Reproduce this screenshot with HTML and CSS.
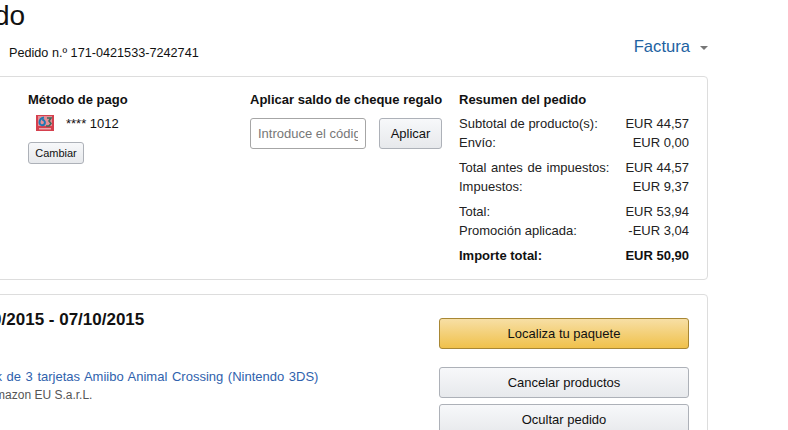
FILE: index.html
```html
<!DOCTYPE html>
<html lang="es">
<head>
<meta charset="utf-8">
<title>Detalles del pedido</title>
<link rel="stylesheet" href="styles.css">
</head>
<body>
<main class="page">
  <h1 class="title">Detalles del pedido</h1>
  <div class="order-row">
    <span class="order-no">Pedido n.º 171-0421533-7242741</span>
    <a class="invoice">Factura <span class="caret"></span></a>
  </div>
  <section class="card summary-card">
    <div class="pay">
      <h2 class="head">Método de pago</h2>
      <div class="pay-line">
        <svg class="pay-icon" width="18" height="18" viewBox="0 0 18 18">
          <rect x="0" y="1" width="18" height="16" fill="#d5404e"/>
          <rect x="2" y="2" width="14" height="10" fill="#e58f97"/>
          <path d="M8 3.5C5 4 3.5 6 3.5 8.5a2.7 2.7 0 1 0 2.7-2.7" fill="none" stroke="#1f78b4" stroke-width="2"/>
          <path d="M11 4h4l-2 3 2 2.5-2 2.5h-3" fill="none" stroke="#3f6a5e" stroke-width="1.6"/>
          <rect x="3" y="14" width="12" height="1.5" fill="#eba9ad"/>
        </svg>
        <span>**** 1012</span>
      </div>
      <button class="btn btn-small">Cambiar</button>
    </div>
    <div class="gift">
      <h2 class="head">Aplicar saldo de cheque regalo</h2>
      <div class="gift-row">
        <input class="code" placeholder="Introduce el código">
        <button class="btn btn-apply">Aplicar</button>
      </div>
    </div>
    <div class="totals">
      <h2 class="head">Resumen del pedido</h2>
      <div class="group">
        <div class="line"><span>Subtotal de producto(s):</span><span>EUR 44,57</span></div>
        <div class="line"><span>Envío:</span><span>EUR 0,00</span></div>
      </div>
      <div class="group">
        <div class="line"><span class="spaced">Total antes de impuestos:</span><span>EUR 44,57</span></div>
        <div class="line"><span>Impuestos:</span><span>EUR 9,37</span></div>
      </div>
      <div class="group">
        <div class="line"><span>Total:</span><span>EUR 53,94</span></div>
        <div class="line"><span>Promoción aplicada:</span><span>-EUR 3,04</span></div>
      </div>
      <div class="group">
        <div class="line line-bold"><span>Importe total:</span><span>EUR 50,90</span></div>
      </div>
    </div>
  </section>
  <section class="card ship-card">
    <div class="ship-info">
      <h3 class="dates">06/10/2015 - 07/10/2015</h3>
      <a class="product">Pack de 3 tarjetas Amiibo Animal Crossing (Nintendo 3DS)</a>
      <p class="seller">Vendido por: Amazon EU S.a.r.L.</p>
    </div>
    <div class="actions">
      <button class="btn btn-wide btn-primary">Localiza tu paquete</button>
      <button class="btn btn-wide btn-cancel">Cancelar productos</button>
      <button class="btn btn-wide">Ocultar pedido</button>
    </div>
  </section>
</main>
</body>
</html>
```

FILE: styles.css
```css
html, body {
  margin: 0;
  height: 430px;
  overflow: hidden;
  background: #fff;
}
body {
  font-family: "Liberation Sans", Arial, sans-serif;
  font-size: 13px;
  color: #111;
}
.page {
  width: 748px;
  margin-left: -40px;
}
.title {
  margin: 0 0 0 -173px;
  font-size: 28px;
  font-weight: 400;
  line-height: 32px;
  white-space: nowrap;
}
.order-row {
  display: flex;
  justify-content: space-between;
  align-items: center;
  height: 28px;
  margin-top: 6px;
  padding: 0 0 0 49px;
}
.order-no {
  padding-top: 2px;
  font-size: 12.67px;
}
.invoice {
  display: flex;
  align-items: center;
  margin-top: -11px;
  font-size: 16.6px;
  color: #2162a1;
}
.caret {
  width: 0;
  height: 0;
  margin-left: 10px;
  margin-top: 2px;
  border: 4px solid transparent;
  border-top-color: #777;
  border-bottom: 0;
}
.card {
  box-sizing: border-box;
  border: 1px solid #ddd;
  border-radius: 4px;
}
.summary-card {
  display: grid;
  grid-template-columns: 222px 209px 230px;
  height: 204px;
  margin-top: 10px;
  padding: 14px 18px 0 67px;
}
.head {
  margin: 0;
  font-size: 13px;
  font-weight: 700;
  line-height: 18px;
  color: #111;
  white-space: nowrap;
}
.pay-line {
  display: flex;
  align-items: center;
  gap: 12px;
  height: 18px;
  margin: 5px 0 0 8px;
}
.pay-icon { display: block; }
.btn {
  box-sizing: border-box;
  border: 1px solid #adb1b8;
  border-radius: 3px;
  background: linear-gradient(#f7f8fa, #e7e9ec);
  font-family: inherit;
  font-size: 13px;
  color: #111;
  padding: 0;
}
.btn-small {
  display: block;
  width: 56px;
  height: 22px;
  margin-top: 10px;
  font-size: 11px;
}
.gift-row {
  display: flex;
  gap: 13px;
  margin-top: 9px;
}
.code {
  box-sizing: border-box;
  width: 116px;
  height: 31px;
  padding: 0 7px;
  border: 1px solid #a6a6a6;
  border-radius: 3px;
  font-family: inherit;
  font-size: 13px;
}
.code::placeholder { color: #777; opacity: 1; }
.btn-apply {
  width: 63px;
  height: 31px;
}
.group {
  margin-top: 6px;
}
.group:first-of-type { margin-top: 5px; }
.line {
  display: flex;
  justify-content: space-between;
  line-height: 19px;
  color: #222;
  white-space: nowrap;
}
.spaced { word-spacing: 1px; }
.line-bold {
  font-weight: 700;
  color: #111;
}
.ship-card {
  display: flex;
  justify-content: space-between;
  height: 200px;
  margin-top: 14px;
  padding: 0 18px 0 0;
}
.ship-info { min-width: 0; }
.dates {
  margin: 15px 0 0 -2px;
  font-size: 17px;
  font-weight: 700;
  line-height: 20px;
  color: #111;
  white-space: nowrap;
}
.product {
  display: block;
  margin: 37px 0 0 12px;
  line-height: 19px;
  word-spacing: 1px;
  color: #2f62ad;
  white-space: nowrap;
}
.seller {
  margin: 0 0 0 -44px;
  line-height: 19px;
  font-size: 12px;
  color: #555;
  white-space: nowrap;
}
.actions {
  display: flex;
  flex-direction: column;
  width: 250px;
  margin-top: 23px;
  gap: 6px;
}
.btn-wide {
  flex: none;
  height: 31px;
}
.btn-primary {
  border-color: #a88734;
  background: linear-gradient(#f7dfa5, #f0c14b);
}
.btn-cancel { margin-top: 12px; }
```
